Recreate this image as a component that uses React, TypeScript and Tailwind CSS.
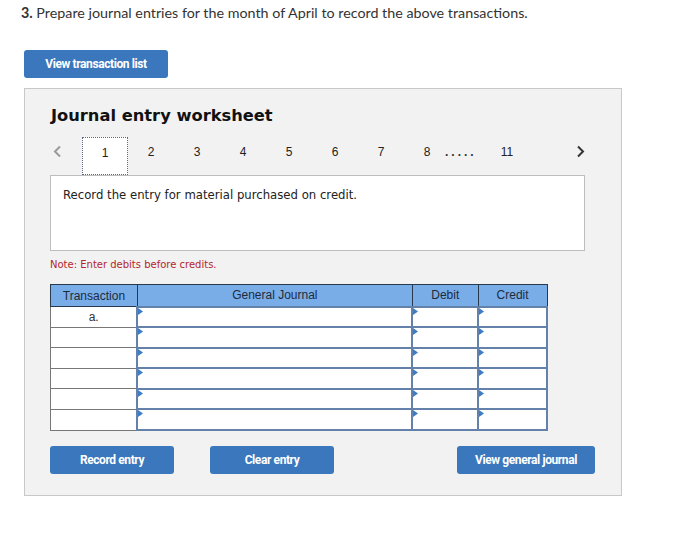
import React from "react";

const tabs = ["1", "2", "3", "4", "5", "6", "7", "8"];
const rows = ["a.", "", "", "", "", ""];

function Chevron({ dir, color }: { dir: "left" | "right"; color: string }) {
  return (
    <svg width="9" height="13" viewBox="0 0 9 13" fill="none">
      <path
        d={dir === "left" ? "M7 1.5 L2 6.5 L7 11.5" : "M2 1.5 L7 6.5 L2 11.5"}
        stroke={color}
        strokeWidth="2"
      />
    </svg>
  );
}

function Marker() {
  return (
    <svg
      className="absolute left-0 top-0"
      width="5"
      height="7"
      viewBox="0 0 5 7"
    >
      <path d="M0 0 L5 3.5 L0 7 Z" fill="#3d7cc6" />
    </svg>
  );
}

function BlueButton({ label, width }: { label: string; width: string }) {
  return (
    <button
      className={`h-[28px] ${width} rounded-[3px] bg-[#3b77bd] text-[12px] font-bold tracking-[-0.4px] text-white`}
      style={{ fontFamily: "Roboto, 'Liberation Sans', sans-serif" }}
    >
      {label}
    </button>
  );
}

export default function App() {
  return (
    <div className="min-h-screen bg-white">
      <p
        className="pl-[21px] pt-[4px] text-[14.3px] leading-[17px] text-[#333]"
        style={{ fontFamily: "Lato, 'Open Sans', sans-serif" }}
      >
        <span className="font-bold">3.</span> Prepare journal entries for the
        month of April to record the above transactions.
      </p>

      <div className="pl-[24px] pt-[29px]">
        <BlueButton label="View transaction list" width="w-[144px]" />
      </div>

      <div className="ml-[24px] mt-[10px] h-[408px] w-[598px] border border-[#c8c8c8] bg-[#f2f2f2] px-[25px] pt-[17px]">
        <h2
          className="pl-[1px] text-[16.3px] font-bold leading-[20px] text-[#111]"
          style={{ fontFamily: "'DejaVu Sans', Verdana, sans-serif" }}
        >
          Journal entry worksheet
        </h2>

        {/* step tabs */}
        <div
          className="mt-[11px] flex h-[38px] items-stretch text-[12px] leading-[14px] text-[#222]"
          style={{ fontFamily: "'Liberation Sans', Arial, sans-serif" }}
        >
          <div className="flex w-[32px] items-start pl-[3px] pt-[8px]">
            <Chevron dir="left" color="#9a9a9a" />
          </div>
          {tabs.map((t, i) => (
            <div
              key={t}
              className={`flex w-[46px] items-start justify-center pt-[8px] ${
                i === 0 ? "border border-dotted border-[#5a6a80] bg-white" : ""
              }`}
            >
              {t}
            </div>
          ))}
          <div className="-ml-[6px] flex w-[40px] items-start pl-[1px] pt-[8px] font-bold tracking-[3px] text-[#333]">
            .....
          </div>
          <div className="flex w-[46px] items-start justify-center pt-[8px]">
            11
          </div>
          <div className="ml-auto flex w-[20px] items-start pt-[8px]">
            <Chevron dir="right" color="#333" />
          </div>
        </div>

        <div
          className="h-[76px] w-[535px] border border-[#bdbdbd] bg-white px-[12px] pt-[11px] text-[11.7px] leading-[16px] text-[#222]"
          style={{ fontFamily: "'DejaVu Sans', Verdana, sans-serif" }}
        >
          Record the entry for material purchased on credit.
        </div>

        <p
          className="mt-[7px] text-[10px] leading-[14px] text-[#b4262b]"
          style={{ fontFamily: "'DejaVu Sans', Verdana, sans-serif" }}
        >
          Note: Enter debits before credits.
        </p>

        <table
          className="mt-[12px] w-[498px] border-collapse text-[12px] text-[#1e2b3c]"
          style={{ fontFamily: "'Liberation Sans', Arial, sans-serif" }}
        >
          <thead>
            <tr className="h-[22px] bg-[#79ade8]">
              <th className="w-[87px] border border-[#2a3a4e] font-normal">
                Transaction
              </th>
              <th className="w-[276px] border border-[#2a3a4e] font-normal">
                General Journal
              </th>
              <th className="w-[66px] border border-[#2a3a4e] font-normal">
                Debit
              </th>
              <th className="w-[69px] border border-[#2a3a4e] font-normal">
                Credit
              </th>
            </tr>
          </thead>
          <tbody>
            {rows.map((r, i) => (
              <tr key={i} className="h-[20.6px]">
                <td className="border border-[#777] bg-white p-0 text-center leading-[14px] text-[#333]">
                  {r}
                </td>
                {[0, 1, 2].map((c) => (
                  <td
                    key={c}
                    className="relative border-[2px] border-[#6381a9] bg-white p-0"
                  >
                    <Marker />
                  </td>
                ))}
              </tr>
            ))}
          </tbody>
        </table>

        <div className="mt-[15px] flex w-[545px]">
          <BlueButton label="Record entry" width="w-[124px]" />
          <div className="ml-[36px]">
            <BlueButton label="Clear entry" width="w-[124px]" />
          </div>
          <div className="ml-auto">
            <BlueButton label="View general journal" width="w-[138px]" />
          </div>
        </div>
      </div>
    </div>
  );
}
